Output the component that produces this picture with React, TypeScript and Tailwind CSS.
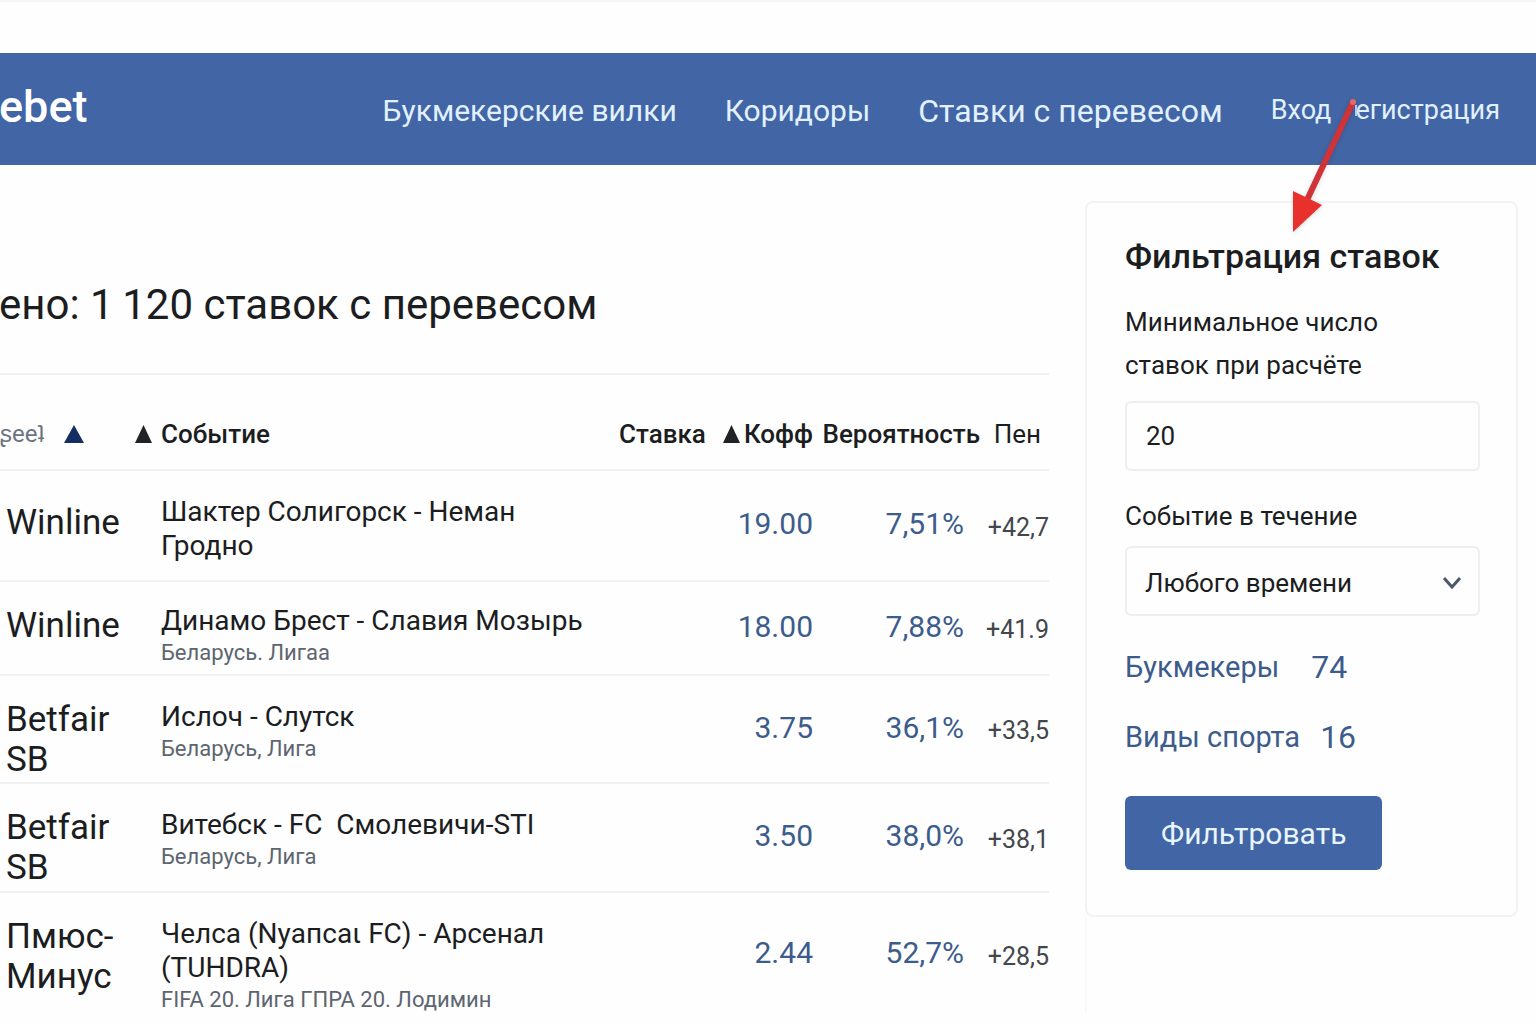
import { useState } from "react";

type Bet = {
  bookmaker: string;
  event: string;
  league?: string;
  odds: string;
  probability: string;
  value: string;
  height: string;
  bookmakerPad: string;
  eventPad: string;
};

const NAV_LINKS = [
  { label: "Букмекерские вилки", className: "text-[30px]" },
  { label: "Коридоры", className: "text-[30px]" },
  { label: "Ставки с перевесом", className: "text-[32px]" },
];

const BETS: Bet[] = [
  {
    bookmaker: "Winline",
    event: "Шактер Солигорск - Неман Гродно",
    odds: "19.00",
    probability: "7,51%",
    value: "+42,7",
    height: "h-[111px]",
    bookmakerPad: "pt-8",
    eventPad: "pt-6",
  },
  {
    bookmaker: "Winline",
    event: "Динамо Брест - Славия Мозырь",
    league: "Беларусь. Лигаа",
    odds: "18.00",
    probability: "7,88%",
    value: "+41.9",
    height: "h-[94px]",
    bookmakerPad: "pt-6",
    eventPad: "pt-[22px]",
  },
  {
    bookmaker: "Betfair SB",
    event: "Ислоч - Слутск",
    league: "Беларусь, Лига",
    odds: "3.75",
    probability: "36,1%",
    value: "+33,5",
    height: "h-[108px]",
    bookmakerPad: "pt-6",
    eventPad: "pt-6",
  },
  {
    bookmaker: "Betfair SB",
    event: "Витебск - FC  Смолевичи-STI",
    league: "Беларусь, Лига",
    odds: "3.50",
    probability: "38,0%",
    value: "+38,1",
    height: "h-[109px]",
    bookmakerPad: "pt-6",
    eventPad: "pt-6",
  },
  {
    bookmaker: "Пмюс- Минус",
    event: "Челса (Nyапсаι FC) - Арсенал (TUHDRA)",
    league: "FIFA 20. Лига ГПРА 20. Лодимин",
    odds: "2.44",
    probability: "52,7%",
    value: "+28,5",
    height: "h-[124px]",
    bookmakerPad: "pt-6",
    eventPad: "pt-6",
  },
];

export default function App() {
  return (
    <div className="relative min-h-screen overflow-hidden border-t-2 border-[#f5f5f5] bg-[#fefefe] font-['Roboto','Liberation_Sans',sans-serif] text-[#1b1d1f]">
      <Header />
      <div className="flex items-start gap-9 pr-[18px]">
        <main className="min-w-0 flex-1 pt-28">
          <h1 className="-ml-px text-[42px] leading-[56px]">
            ено: 1{"\u2009"}120 ставок с перевесом
          </h1>
          <BetsTable />
        </main>
        <FilterPanel />
      </div>
      <PointerArrow />
    </div>
  );
}

function Header() {
  return (
    <header className="mt-[51px] flex h-28 items-center justify-between bg-[#4165a5] pr-9 text-[#e2f1ff]">
      <a href="#" className="-ml-px pb-1 text-[45px] font-medium text-white">
        ebet
      </a>
      <nav className="flex items-center pt-[3px]">
        {NAV_LINKS.map((link) => (
          <a key={link.label} href="#" className={`mr-12 ${link.className}`}>
            {link.label}
          </a>
        ))}
        <a href="#" className="mr-6 text-[27px]">
          Вход
        </a>
        <a href="#" aria-label="Регистрация" className="text-[27px]">
          егистрация
        </a>
      </nav>
    </header>
  );
}

function SortMark({ className }: { className: string }) {
  return (
    <svg
      viewBox="0 0 20 20"
      preserveAspectRatio="none"
      className={className}
      aria-hidden="true"
    >
      <path d="M10 0 20 20H0Z" fill="currentColor" />
    </svg>
  );
}

function BetsTable() {
  return (
    <table className="mt-10 w-full table-fixed border-collapse border-t-2 border-[#f1f1f2]">
      <colgroup>
        <col className="w-[161px]" />
        <col />
        <col className="w-[90px]" />
        <col className="w-[104px]" />
        <col className="w-[167px]" />
        <col className="w-[69px]" />
      </colgroup>
      <thead>
        <tr className="h-24 border-b-2 border-[#f1f1f2] text-left text-[26px]">
          <th className="pt-6 font-normal text-[#6b7480]">
            <span className="flex items-center">
              <span className="text-[24px]">ʂeeʇ</span>
              <SortMark className="ml-5 h-[18px] w-5 text-[#142d63]" />
              <SortMark className="mr-[9px] ml-auto h-[18px] w-[17px] text-[#1f2326]" />
            </span>
          </th>
          <th className="pt-6 font-medium">Событие</th>
          <th className="pt-6 font-medium">Ставка</th>
          <th className="pt-6 font-medium">
            <span className="flex items-center justify-end gap-1">
              <SortMark className="h-[18px] w-[17px] text-[#1f2326]" />
              Кофф
            </span>
          </th>
          <th className="pt-6 text-right font-medium">Вероятность</th>
          <th className="pt-6 pr-2 text-right font-normal">Пен</th>
        </tr>
      </thead>
      <tbody>
        {BETS.map((bet) => (
          <BetRow key={bet.event} bet={bet} />
        ))}
      </tbody>
    </table>
  );
}

function BetRow({ bet }: { bet: Bet }) {
  return (
    <tr className={`border-b-2 border-[#f1f1f2] last:border-0 ${bet.height}`}>
      <td
        className={`pr-10 pl-[6px] align-top text-[35px] leading-10 ${bet.bookmakerPad}`}
      >
        {bet.bookmaker}
      </td>
      <td className={`align-top ${bet.eventPad}`} colSpan={2}>
        <div className="max-w-[430px] text-[28px] leading-[34px] whitespace-pre-wrap">
          {bet.event}
        </div>
        {bet.league && (
          <div className="text-[22px] leading-[30px] text-[#5d6570]">
            {bet.league}
          </div>
        )}
      </td>
      <td className="pb-1 text-right text-[30px] text-[#3c5c8c]">
        {bet.odds}
      </td>
      <td className="pr-4 pb-1 text-right text-[30px] text-[#3c5c8c]">
        {bet.probability}
      </td>
      <td className="pt-1 text-right text-[25px] text-[#43474b]">
        {bet.value}
      </td>
    </tr>
  );
}

function FilterPanel() {
  const [minBets, setMinBets] = useState("20");
  const [period, setPeriod] = useState("any");

  return (
    <aside className="mt-9 w-[433px] shrink-0">
      <form
        onSubmit={(e) => e.preventDefault()}
        className="rounded-lg border-2 border-[#f3f3f4] pt-[30px] pr-9 pb-[45px] pl-[38px]"
      >
        <h2 className="text-[34px] leading-[46px] font-medium">
          Фильтрация ставок
        </h2>

        <label
          htmlFor="min-bets"
          className="mt-[22px] block max-w-[300px] text-[26px] leading-[43px]"
        >
          Минимальное число ставок при расчёте
        </label>
        <input
          id="min-bets"
          type="text"
          value={minBets}
          onChange={(e) => setMinBets(e.target.value)}
          className="mt-[14px] block h-[70px] w-full rounded-md border-2 border-[#edeeef] px-[19px] text-[26px]"
        />

        <label
          htmlFor="period"
          className="mt-6 block text-[26px] leading-[43px]"
        >
          Событие в течение
        </label>
        <div className="relative mt-2">
          <select
            id="period"
            value={period}
            onChange={(e) => setPeriod(e.target.value)}
            className="block h-[70px] w-full appearance-none rounded-md border-2 border-[#edeeef] px-[18px] pt-1 text-[26px]"
          >
            <option value="any">Любого времени</option>
          </select>
          <svg
            viewBox="0 0 18 14"
            className="pointer-events-none absolute top-[30px] right-[19px] h-[14px] w-[18px]"
            fill="none"
            stroke="#4f5a69"
            strokeWidth="3"
            aria-hidden="true"
          >
            <path d="M1 2 9 11 17 2" />
          </svg>
        </div>

        <ul className="mt-7 text-[29px] leading-[46px] text-[#3c5c8c]">
          <li>
            <a href="#" className="flex gap-8">
              Букмекеры <span className="text-[32px]">74</span>
            </a>
          </li>
          <li className="mt-6">
            <a href="#" className="flex gap-5">
              Виды спорта <span className="text-[32px]">16</span>
            </a>
          </li>
        </ul>

        <button
          type="submit"
          className="mt-9 h-[74px] rounded-md bg-[#4165a5] px-9 text-[30px] text-[#e8f5ff]"
        >
          Фильтровать
        </button>
      </form>
      <div className="h-24 border-l-2 border-[#f9f9f9]" />
    </aside>
  );
}

/* Стрелка-выноска поверх шапки и панели фильтра */
function PointerArrow() {
  return (
    <svg
      viewBox="0 0 80 150"
      className="pointer-events-none absolute top-[88px] right-[166px] h-[150px] w-20 drop-shadow-sm"
      aria-hidden="true"
    >
      <path d="M66 15V26" stroke="#b5cbea" strokeWidth="2" />
      <path
        d="M63 12 17 110"
        stroke="#cf3237"
        strokeWidth="6"
        strokeLinecap="round"
      />
      <circle cx="63" cy="12" r="3" fill="#e0696c" />
      <path d="M3 101 32 115 3 142Z" fill="#e8302c" />
    </svg>
  );
}
